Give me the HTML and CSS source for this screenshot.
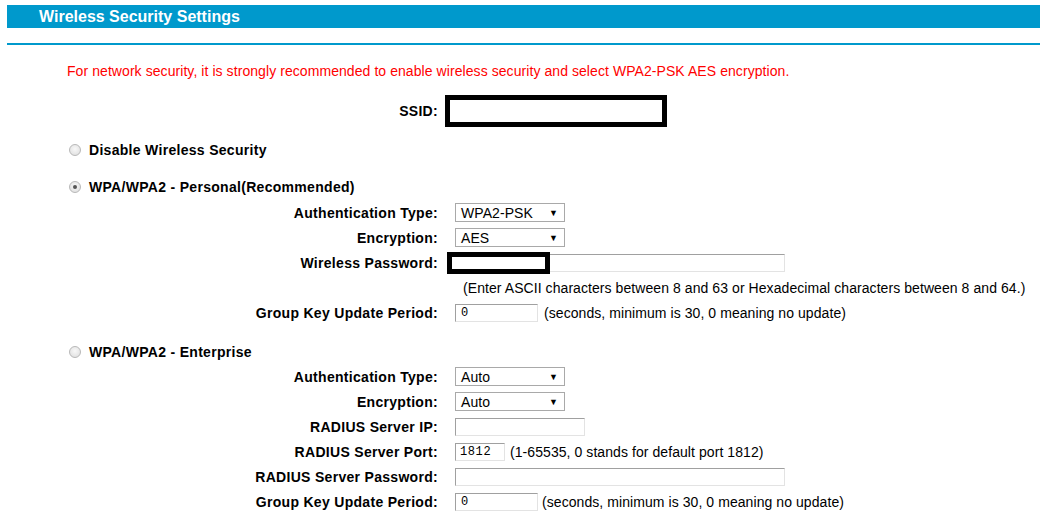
FILE: index.html
```html
<!DOCTYPE html>
<html lang="en">
<head>
    <meta charset="UTF-8">
    <title>Wireless Security Settings</title>
    <link rel="stylesheet" href="styles.css">
</head>
<body>

    <div id="titleBar">
        <h1>Wireless Security Settings</h1>
    </div>
    <div id="rule"></div>

    <p class="warning">For network security, it is strongly recommended to enable wireless security and select WPA2-PSK AES encryption.</p>

    <div class="ssid-row">
        <span class="label">SSID:</span>
        <div class="redact ssid-box"></div>
    </div>

    <div class="option option-disable">
        <span class="radio"></span>
        <span>Disable Wireless Security</span>
    </div>

    <div class="option option-personal">
        <span class="radio checked"></span>
        <span>WPA/WPA2 - Personal(Recommended)</span>
    </div>

    <div class="fields">
        <div class="field">
            <span class="label">Authentication Type:</span>
            <div class="select"><span>WPA2-PSK</span><span class="arrow">&#9660;</span></div>
        </div>
        <div class="field">
            <span class="label">Encryption:</span>
            <div class="select"><span>AES</span><span class="arrow">&#9660;</span></div>
        </div>
        <div class="field">
            <span class="label">Wireless Password:</span>
            <div class="input-wrap">
                <div class="input wide"></div>
                <div class="redact pass-box"></div>
            </div>
        </div>
        <div class="field">
            <span class="label"></span>
            <span class="hint">(Enter ASCII characters between 8 and 63 or Hexadecimal characters between 8 and 64.)</span>
        </div>
        <div class="field">
            <span class="label">Group Key Update Period:</span>
            <div class="inline">
                <div class="input short">0</div>
                <span class="note">(seconds, minimum is 30, 0 meaning no update)</span>
            </div>
        </div>
    </div>

    <div class="option option-enterprise">
        <span class="radio"></span>
        <span>WPA/WPA2 - Enterprise</span>
    </div>

    <div class="fields fields-enterprise">
        <div class="field">
            <span class="label">Authentication Type:</span>
            <div class="select"><span>Auto</span><span class="arrow">&#9660;</span></div>
        </div>
        <div class="field">
            <span class="label">Encryption:</span>
            <div class="select"><span>Auto</span><span class="arrow">&#9660;</span></div>
        </div>
        <div class="field">
            <span class="label">RADIUS Server IP:</span>
            <div class="input medium"></div>
        </div>
        <div class="field">
            <span class="label">RADIUS Server Port:</span>
            <div class="inline">
                <div class="input port">1812</div>
                <span class="note note-port">(1-65535, 0 stands for default port 1812)</span>
            </div>
        </div>
        <div class="field">
            <span class="label">RADIUS Server Password:</span>
            <div class="input wide"></div>
        </div>
        <div class="field">
            <span class="label">Group Key Update Period:</span>
            <div class="inline">
                <div class="input short">0</div>
                <span class="note note-tight">(seconds, minimum is 30, 0 meaning no update)</span>
            </div>
        </div>
    </div>

</body>
</html>
```

FILE: styles.css
```css
body {
    font-family: 'Liberation Sans', Arial, sans-serif;
    font-size: 14px;
    letter-spacing: 0.07px;
    color: #000;
    margin: 0;
    background-color: #fff;
    overflow: hidden;
}

#titleBar {
    margin: 5px 0 0 7px;
    height: 23px;
    background-color: #0099cc;
}

#titleBar h1 {
    margin: 0;
    padding-left: 32px;
    font-size: 16px;
    letter-spacing: 0;
    line-height: 23px;
    color: #fff;
}

#rule {
    margin: 15px 0 0 7px;
    height: 2px;
    background-color: #0099cc;
}

.warning {
    margin: 16px 0 0 67px;
    line-height: 20px;
    color: #ff0000;
}

.ssid-row {
    margin-top: 14px;
    display: flex;
    align-items: center;
    height: 32px;
}

.label {
    width: 438px;
    text-align: right;
    font-weight: bold;
    letter-spacing: 0.3px;
    flex-shrink: 0;
}

.redact {
    box-sizing: border-box;
    border: 5px solid #000;
    background-color: #fff;
}

.ssid-box {
    margin-left: 7px;
    width: 222px;
    height: 32px;
}

.option {
    display: flex;
    align-items: center;
    height: 20px;
    padding-left: 69px;
    font-weight: bold;
    letter-spacing: 0.3px;
}

.option-disable {
    margin-top: 13px;
}

.option-personal {
    margin-top: 17px;
}

.option-enterprise {
    margin-top: 17px;
}

.radio {
    box-sizing: border-box;
    width: 12px;
    height: 12px;
    margin-right: 8px;
    border: 1px solid #b8b8b8;
    border-radius: 50%;
    background: radial-gradient(circle at 50% 40%, #f8f8f8, #dcdcdc);
    position: relative;
}

.radio.checked::after {
    content: '';
    position: absolute;
    left: 3px;
    top: 3px;
    width: 4px;
    height: 4px;
    border-radius: 50%;
    background-color: #555;
}

.fields {
    margin-top: 3px;
}

.fields-enterprise {
    margin-top: 2px;
}

.field {
    display: flex;
    align-items: center;
    height: 25px;
}

.field > .label + * {
    margin-left: 17px;
}

.select {
    box-sizing: border-box;
    width: 110px;
    height: 19px;
    border: 1px solid #a9a9a9;
    display: flex;
    align-items: center;
    justify-content: space-between;
    padding: 0 6px 0 5px;
    background-color: #fff;
}

.arrow {
    font-size: 9px;
}

.input {
    box-sizing: border-box;
    height: 18px;
    border: 1px solid;
    border-color: #a0a0a0 #e3e3e3 #e3e3e3 #a0a0a0;
    font-family: 'Liberation Mono', 'Courier New', monospace;
    font-size: 12px;
    letter-spacing: 0;
    line-height: 16px;
    padding-left: 5px;
    background-color: #fff;
}

.input.wide {
    width: 330px;
}

.input.medium {
    width: 130px;
}

.input.short {
    width: 83px;
}

.input.port {
    width: 50px;
    letter-spacing: 0.6px;
    padding-left: 4px;
}

.input-wrap {
    position: relative;
}

.pass-box {
    position: absolute;
    left: -8px;
    top: -2px;
    width: 103px;
    height: 22px;
}

.hint {
    padding-left: 8px;
}

.inline {
    display: flex;
    align-items: center;
}

.note {
    margin-left: 6px;
}

.note-port {
    margin-left: 5px;
}

.note-tight {
    margin-left: 4px;
}
```
